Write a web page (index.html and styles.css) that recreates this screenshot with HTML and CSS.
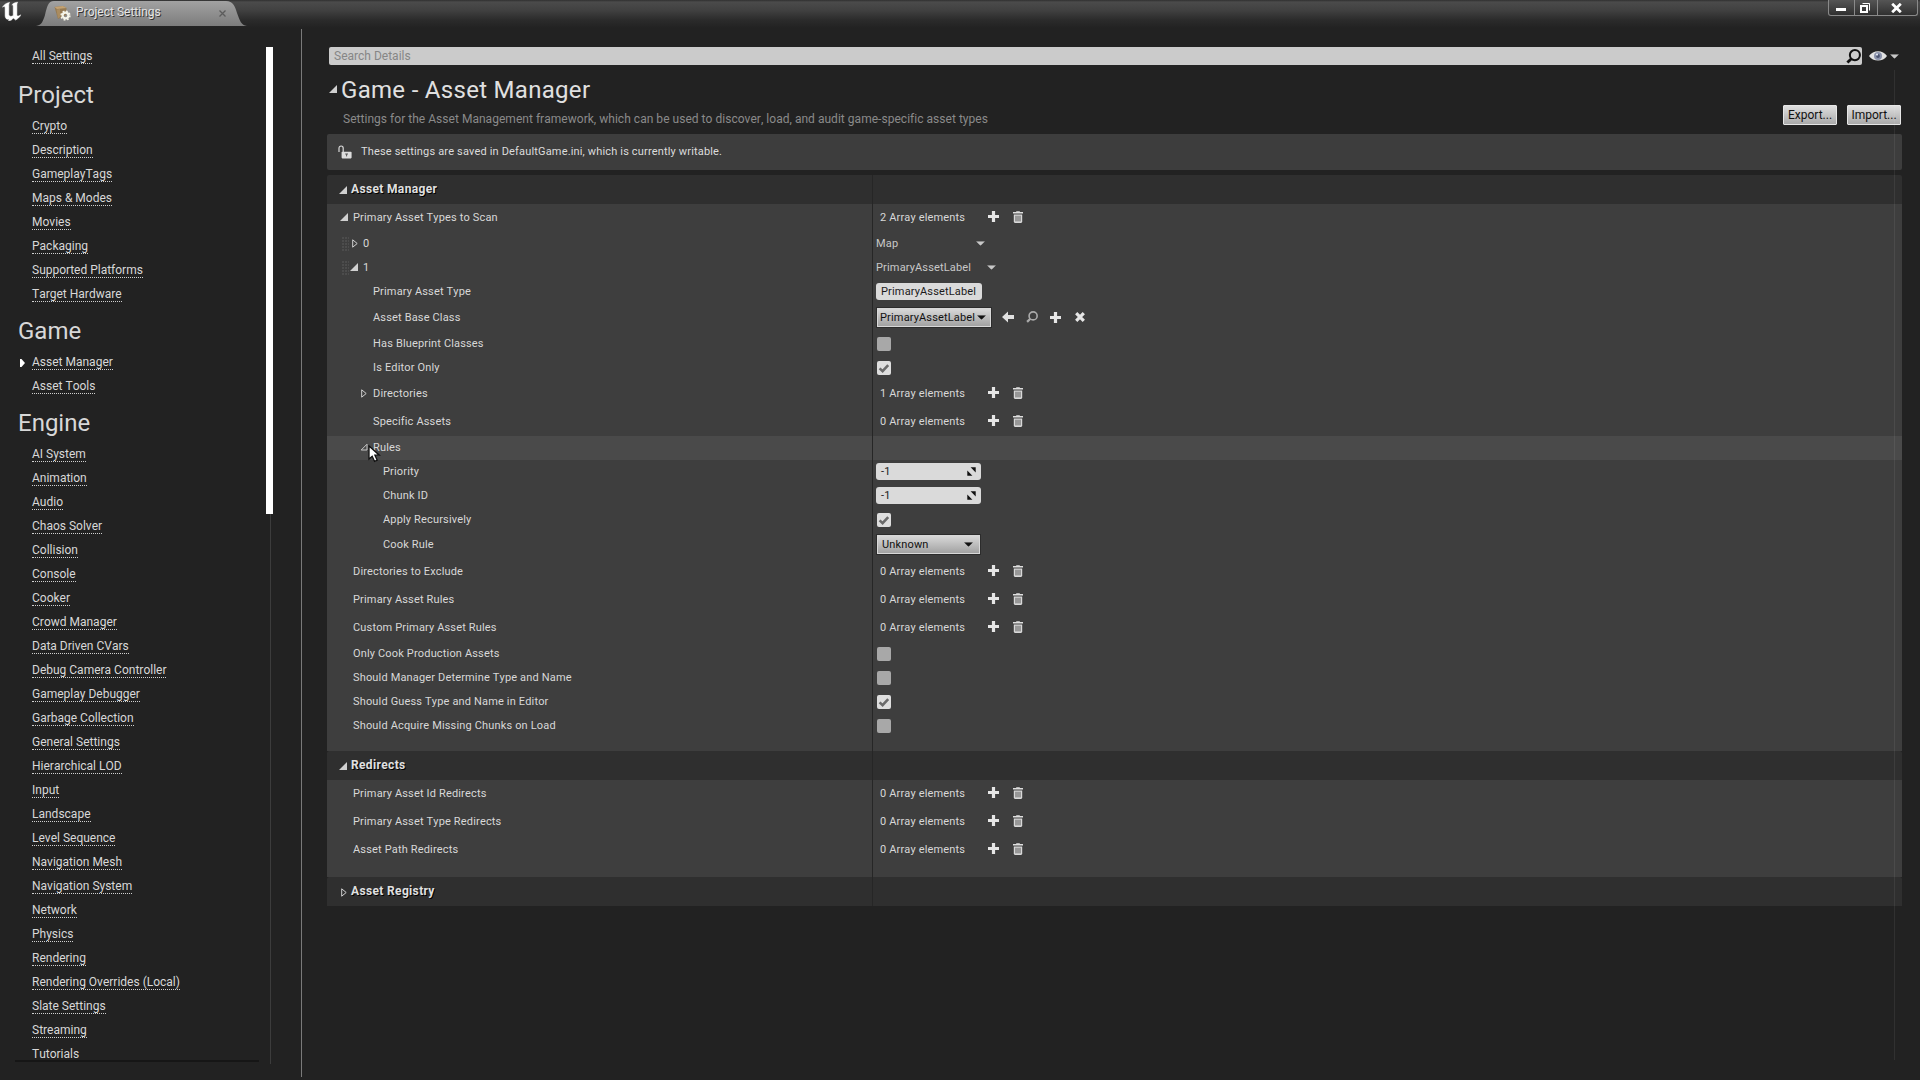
FILE: index.html
```html
<!DOCTYPE html>
<html lang="en">
<head>
    <meta charset="UTF-8">
    <title>Project Settings</title>
    <link rel="stylesheet" href="styles.css">
</head>
<body>
    <!-- shared icons -->
    <svg class="sprite" width="0" height="0">
        <symbol id="open" viewBox="0 0 8 8"><path d="M8 0V8H0Z" fill="#d0d0d0"/></symbol>
        <symbol id="open-hover" viewBox="0 0 8 8"><path d="M7 1.2V7H1.2Z" fill="none" stroke="#c8c8c8"/></symbol>
        <symbol id="closed" viewBox="0 0 6 9"><path d="M0.7 0.8V8.2L5.2 4.5Z" fill="none" stroke="#d0d0d0"/></symbol>
        <symbol id="down" viewBox="0 0 8 4"><path d="M0 0H8L4 4Z" fill="currentColor"/></symbol>
        <symbol id="plus" viewBox="0 0 11 11"><path d="M3.9 0H7.1V3.9H11V7.1H7.1V11H3.9V7.1H0V3.9H3.9Z" fill="#e6e6e6"/></symbol>
        <symbol id="trash" viewBox="0 0 10 12">
            <path d="M0 1.1H3.2V0.2H6.8V1.1H10V2.6H0Z" fill="#dedede"/>
            <path d="M0.8 3.4H9.2V10.6Q9.2 12 8 12H2Q0.8 12 0.8 10.6Z" fill="#d8d8d8"/>
            <path d="M3 4.7V10.4M5 4.7V10.4M7 4.7V10.4" stroke="#4a4a4a" stroke-width="0.9"/>
        </symbol>
        <symbol id="glass" viewBox="0 0 14 14">
            <circle cx="8.3" cy="5.7" r="4.7" fill="none" stroke="currentColor" stroke-width="1.9"/>
            <path d="M5 9L1.3 12.7" stroke="currentColor" stroke-width="2.6"/>
        </symbol>
        <symbol id="back" viewBox="0 0 12 12"><path d="M0 6L6 0.5V4H12V8H6V11.5Z" fill="#e0e0e0"/></symbol>
        <symbol id="cross" viewBox="0 0 10 10"><path d="M1.2 1.2L8.8 8.8M8.8 1.2L1.2 8.8" stroke="#e6e6e6" stroke-width="3.2"/></symbol>
        <symbol id="check" viewBox="0 0 14 14"><path d="M2.6 7.4L5.6 10.2L11.2 4.2" fill="none" stroke="#6a6a6a" stroke-width="2.6"/></symbol>
        <symbol id="spin" viewBox="0 0 9 9"><path d="M3.6 0.3H8.7V5.4ZM0.3 3.6V8.7H5.4Z" fill="#111"/></symbol>
    </svg>

    <header class="titlebar">
        <svg class="logo" width="20" height="21" viewBox="0 0 20 21">
            <path d="M0.5 7.2C2 4.3 4.6 3 7.6 2.4C6.9 3.4 6.8 4.2 6.8 5.3V15C7.5 16.4 9.5 16.8 11.2 15.6V6.4C11.2 5.2 10.6 4.6 9.8 4.9C11.2 3.3 13.2 2.3 15.7 2.2C15 3.2 14.9 4.2 14.9 5.4V14.9C15 16.3 16.2 16.6 18.7 14.8C18 17.3 15.6 18.7 13.7 20.1L11.3 18C10.4 19.5 9 20.7 6.4 20.8C7 20.2 7.2 19.7 6.7 19.3C4.4 19.5 3.2 18 3.1 15.9V7.8C3.1 6.1 1.6 6.2 0.5 7.2Z" fill="#fff" stroke="#fff" stroke-width="0.5"/>
        </svg>
        <div class="tab">
            <svg class="tab-shape" width="211" height="26" viewBox="0 0 211 26">
                <defs>
                    <linearGradient id="tab-fill" x1="0" y1="0" x2="0" y2="1">
                        <stop offset="0" stop-color="#a2a2a2"/>
                        <stop offset="1" stop-color="#7c7c7c"/>
                    </linearGradient>
                </defs>
                <path d="M0 26C6 25 7 21 9 15C11 7 12 1 18 1H190C197 1 199 6 201 13C204 21 205 25 211 26Z" fill="url(#tab-fill)"/>
            </svg>
            <svg class="tab-icon" width="17" height="16" viewBox="0 0 17 16">
                <path d="M0.5 2L9 1L12.5 3L12 10L4 14Z" fill="#957a52"/>
                <path d="M0.5 2L9 1L12.5 3L3 4Z" fill="#c4a272"/>
                <path d="M2.5 4.5L6 4V12L4 13.5Z" fill="#aa8c60"/>
                <circle cx="11.5" cy="10.5" r="2.9" fill="none" stroke="#f4f4e8" stroke-width="2.2"/>
                <circle cx="11.5" cy="10.5" r="4.4" fill="none" stroke="#f4f4e8" stroke-width="1.5" stroke-dasharray="1.8 1.65"/>
            </svg>
            <span class="tab-title">Project Settings</span>
            <svg class="tab-close" width="7" height="7" viewBox="0 0 7 7"><path d="M0.5 0.5L6.5 6.5M6.5 0.5L0.5 6.5" stroke="#5c5c5c" stroke-width="1.3"/></svg>
        </div>
        <div class="window-buttons">
            <div class="window-button"><svg width="10" height="3"><rect width="10" height="3" fill="#fff"/></svg></div>
            <div class="window-button"><svg width="10" height="10" viewBox="0 0 10 10"><path d="M1 3H7V9H1Z" fill="none" stroke="#fff" stroke-width="2"/><path d="M2.5 0.5H9.5V7.5" fill="none" stroke="#fff"/></svg></div>
            <div class="window-button close"><svg width="11" height="10" viewBox="0 0 11 10"><path d="M1.2 0.8L9.8 9.2M9.8 0.8L1.2 9.2" stroke="#fff" stroke-width="2.8"/></svg></div>
        </div>
    </header>

    <main class="window">
        <nav class="sidebar">
            <div class="sidebar-list">
                <div class="item all"><a>All Settings</a></div>
                <h2>Project</h2>
                <div class="item"><a>Crypto</a></div>
                <div class="item"><a>Description</a></div>
                <div class="item"><a>GameplayTags</a></div>
                <div class="item"><a>Maps &amp; Modes</a></div>
                <div class="item"><a>Movies</a></div>
                <div class="item"><a>Packaging</a></div>
                <div class="item"><a>Supported Platforms</a></div>
                <div class="item"><a>Target Hardware</a></div>
                <h2>Game</h2>
                <div class="item"><svg class="current" width="5" height="8"><path d="M0 0H1.5L5 4L1.5 8H0Z" fill="#fff"/></svg><a>Asset Manager</a></div>
                <div class="item"><a>Asset Tools</a></div>
                <h2>Engine</h2>
                <div class="item"><a>AI System</a></div>
                <div class="item"><a>Animation</a></div>
                <div class="item"><a>Audio</a></div>
                <div class="item"><a>Chaos Solver</a></div>
                <div class="item"><a>Collision</a></div>
                <div class="item"><a>Console</a></div>
                <div class="item"><a>Cooker</a></div>
                <div class="item"><a>Crowd Manager</a></div>
                <div class="item"><a>Data Driven CVars</a></div>
                <div class="item"><a>Debug Camera Controller</a></div>
                <div class="item"><a>Gameplay Debugger</a></div>
                <div class="item"><a>Garbage Collection</a></div>
                <div class="item"><a>General Settings</a></div>
                <div class="item"><a>Hierarchical LOD</a></div>
                <div class="item"><a>Input</a></div>
                <div class="item"><a>Landscape</a></div>
                <div class="item"><a>Level Sequence</a></div>
                <div class="item"><a>Navigation Mesh</a></div>
                <div class="item"><a>Navigation System</a></div>
                <div class="item"><a>Network</a></div>
                <div class="item"><a>Physics</a></div>
                <div class="item"><a>Rendering</a></div>
                <div class="item"><a>Rendering Overrides (Local)</a></div>
                <div class="item"><a>Slate Settings</a></div>
                <div class="item"><a>Streaming</a></div>
                <div class="item"><a>Tutorials</a></div>
            </div>
            <div class="scrollbar"><div class="thumb"></div></div>
        </nav>

        <section class="details">
            <div class="search-row">
                <div class="search">
                    <span>Search Details</span>
                    <svg width="15" height="15"><use href="#glass"/></svg>
                </div>
                <svg class="eye" width="18" height="12" viewBox="0 0 18 12">
                    <path d="M0 6C4 -0.5 14 -0.5 18 6C14 12 4 12 0 6Z" fill="#e2e2e2"/>
                    <circle cx="9" cy="6" r="4" fill="#8b93ab"/>
                    <circle cx="9" cy="6" r="1.9" fill="#4a5270"/>
                    <circle cx="8" cy="4.6" r="1.1" fill="#dfe4f0"/>
                </svg>
                <svg class="caret" width="9" height="5" viewBox="0 0 8 4"><use href="#down"/></svg>
            </div>

            <div class="page-head">
                <div class="page-title">
                    <svg width="8" height="8"><use href="#open"/></svg>
                    <h1>Game - Asset Manager</h1>
                </div>
                <div class="page-sub">
                    <p>Settings for the Asset Management framework, which can be used to discover, load, and audit game-specific asset types</p>
                    <button>Export...</button>
                    <button>Import...</button>
                </div>
            </div>

            <div class="notice">
                <svg width="14" height="14" viewBox="0 0 14 14">
                    <path d="M1 7V3.2Q1 1 3.2 1Q5.2 1 5.2 3.2V7" fill="none" stroke="#d8d8d8" stroke-width="1.2"/>
                    <rect x="3.6" y="6.8" width="10" height="6.6" rx="0.8" fill="#dcdcdc"/>
                    <path d="M7.2 9H10M8.6 9V11.4" stroke="#555"/>
                </svg>
                <span>These settings are saved in DefaultGame.ini, which is currently writable.</span>
            </div>

            <div class="panel">
                <div class="category">
                    <div class="name"><svg width="8" height="8"><use href="#open"/></svg>Asset Manager</div>
                    <div class="value"></div>
                </div>
                <div class="rows">
                    <div class="row tall">
                        <div class="name"><svg width="8" height="8"><use href="#open"/></svg><span>Primary Asset Types to Scan</span></div>
                        <div class="value array"><span>2 Array elements</span><svg width="11" height="11"><use href="#plus"/></svg><svg width="10" height="12"><use href="#trash"/></svg></div>
                    </div>
                    <div class="row">
                        <div class="name element"><i class="grip"></i><svg width="6" height="9"><use href="#closed"/></svg><span>0</span></div>
                        <div class="value menu"><span>Map</span><svg width="9" height="5" viewBox="0 0 8 4"><use href="#down"/></svg></div>
                    </div>
                    <div class="row">
                        <div class="name element"><i class="grip"></i><svg class="shift" width="8" height="8"><use href="#open"/></svg><span>1</span></div>
                        <div class="value menu"><span class="long">PrimaryAssetLabel</span><svg width="9" height="5" viewBox="0 0 8 4"><use href="#down"/></svg></div>
                    </div>
                    <div class="row">
                        <div class="name level-2"><span>Primary Asset Type</span></div>
                        <div class="value"><div class="field type"><span>PrimaryAssetLabel</span></div></div>
                    </div>
                    <div class="row tall">
                        <div class="name level-2"><span>Asset Base Class</span></div>
                        <div class="value asset">
                            <div class="combo class-combo"><span>PrimaryAssetLabel</span><svg width="9" height="5" viewBox="0 0 8 4"><use href="#down"/></svg></div>
                            <svg width="12" height="12"><use href="#back"/></svg>
                            <svg class="browse" width="12" height="12"><use href="#glass"/></svg>
                            <svg width="11" height="11"><use href="#plus"/></svg>
                            <svg class="clear" width="10" height="10"><use href="#cross"/></svg>
                        </div>
                    </div>
                    <div class="row">
                        <div class="name level-2"><span>Has Blueprint Classes</span></div>
                        <div class="value"><i class="checkbox"></i></div>
                    </div>
                    <div class="row">
                        <div class="name level-2"><span>Is Editor Only</span></div>
                        <div class="value"><svg class="checkbox checked"><use href="#check"/></svg></div>
                    </div>
                    <div class="row tall">
                        <div class="name level-2"><svg width="6" height="9"><use href="#closed"/></svg><span>Directories</span></div>
                        <div class="value array"><span>1 Array elements</span><svg width="11" height="11"><use href="#plus"/></svg><svg width="10" height="12"><use href="#trash"/></svg></div>
                    </div>
                    <div class="row tall">
                        <div class="name level-2"><span>Specific Assets</span></div>
                        <div class="value array"><span>0 Array elements</span><svg width="11" height="11"><use href="#plus"/></svg><svg width="10" height="12"><use href="#trash"/></svg></div>
                    </div>
                    <div class="row hovered">
                        <div class="name level-2">
                            <svg width="8" height="8"><use href="#open-hover"/></svg><span>Rules</span>
                            <svg class="cursor" width="13" height="18" viewBox="0 0 13 18"><path d="M1 1V14L4.2 11.2L6.6 16.4L9.2 15.2L6.9 10.2H11.3Z" fill="#fff" stroke="#111" stroke-width="1.3"/></svg>
                        </div>
                        <div class="value"></div>
                    </div>
                    <div class="row">
                        <div class="name level-3"><span>Priority</span></div>
                        <div class="value"><div class="field number"><span>-1</span><svg width="9" height="9"><use href="#spin"/></svg></div></div>
                    </div>
                    <div class="row">
                        <div class="name level-3"><span>Chunk ID</span></div>
                        <div class="value"><div class="field number"><span>-1</span><svg width="9" height="9"><use href="#spin"/></svg></div></div>
                    </div>
                    <div class="row">
                        <div class="name level-3"><span>Apply Recursively</span></div>
                        <div class="value"><svg class="checkbox checked"><use href="#check"/></svg></div>
                    </div>
                    <div class="row mid">
                        <div class="name level-3"><span>Cook Rule</span></div>
                        <div class="value"><div class="combo cook-combo"><span>Unknown</span><svg width="9" height="5" viewBox="0 0 8 4"><use href="#down"/></svg></div></div>
                    </div>
                    <div class="row tall">
                        <div class="name"><span>Directories to Exclude</span></div>
                        <div class="value array"><span>0 Array elements</span><svg width="11" height="11"><use href="#plus"/></svg><svg width="10" height="12"><use href="#trash"/></svg></div>
                    </div>
                    <div class="row tall">
                        <div class="name"><span>Primary Asset Rules</span></div>
                        <div class="value array"><span>0 Array elements</span><svg width="11" height="11"><use href="#plus"/></svg><svg width="10" height="12"><use href="#trash"/></svg></div>
                    </div>
                    <div class="row tall">
                        <div class="name"><span>Custom Primary Asset Rules</span></div>
                        <div class="value array"><span>0 Array elements</span><svg width="11" height="11"><use href="#plus"/></svg><svg width="10" height="12"><use href="#trash"/></svg></div>
                    </div>
                    <div class="row">
                        <div class="name"><span>Only Cook Production Assets</span></div>
                        <div class="value"><i class="checkbox"></i></div>
                    </div>
                    <div class="row">
                        <div class="name"><span>Should Manager Determine Type and Name</span></div>
                        <div class="value"><i class="checkbox"></i></div>
                    </div>
                    <div class="row">
                        <div class="name"><span>Should Guess Type and Name in Editor</span></div>
                        <div class="value"><svg class="checkbox checked"><use href="#check"/></svg></div>
                    </div>
                    <div class="row">
                        <div class="name"><span>Should Acquire Missing Chunks on Load</span></div>
                        <div class="value"><i class="checkbox"></i></div>
                    </div>
                    <div class="row end"><div class="name"></div><div class="value"></div></div>
                </div>

                <div class="category">
                    <div class="name"><svg width="8" height="8"><use href="#open"/></svg>Redirects</div>
                    <div class="value"></div>
                </div>
                <div class="rows">
                    <div class="row tall">
                        <div class="name"><span>Primary Asset Id Redirects</span></div>
                        <div class="value array"><span>0 Array elements</span><svg width="11" height="11"><use href="#plus"/></svg><svg width="10" height="12"><use href="#trash"/></svg></div>
                    </div>
                    <div class="row tall">
                        <div class="name"><span>Primary Asset Type Redirects</span></div>
                        <div class="value array"><span>0 Array elements</span><svg width="11" height="11"><use href="#plus"/></svg><svg width="10" height="12"><use href="#trash"/></svg></div>
                    </div>
                    <div class="row tall">
                        <div class="name"><span>Asset Path Redirects</span></div>
                        <div class="value array"><span>0 Array elements</span><svg width="11" height="11"><use href="#plus"/></svg><svg width="10" height="12"><use href="#trash"/></svg></div>
                    </div>
                    <div class="row end"><div class="name"></div><div class="value"></div></div>
                </div>

                <div class="category">
                    <div class="name"><svg width="6" height="9"><use href="#closed"/></svg>Asset Registry</div>
                    <div class="value"></div>
                </div>
            </div>
            <div class="details-track"></div>
        </section>
    </main>
</body>
</html>
```
FILE: styles.css
```css
* {
    box-sizing: border-box;
}
body {
    margin: 0;
    width: 1920px;
    height: 1080px;
    overflow: hidden;
    display: flex;
    flex-direction: column;
    background: #222;
    color: #d8d8d8;
    font-family: Roboto, "Liberation Sans", sans-serif;
    font-size: 12px;
    line-height: 14px;
    font-kerning: none;
}
h1, h2, p {
    margin: 0;
    font-weight: normal;
}
svg {
    display: block;
    flex: none;
}
.sprite {
    position: absolute;
}

/* title bar */
.titlebar {
    flex: none;
    height: 29px;
    display: flex;
    align-items: flex-start;
    background: linear-gradient(#303030 0, #4b4b4b 2px, #414141 10px, #2b2b2b 20px, #222 28px);
}
.logo {
    margin-left: 2px;
}
.tab {
    position: relative;
    width: 211px;
    height: 26px;
    margin-left: 14px;
    padding-left: 18px;
    display: flex;
    align-items: center;
}
.tab-shape {
    position: absolute;
    left: 0;
    top: 0;
}
.tab-icon,
.tab-title,
.tab-close {
    position: relative;
}
.tab-title {
    margin: -2px 0 0 5px;
    width: 143px;
    color: #e4e4e4;
    text-shadow: 1px 1px 0 #333;
}
.window-buttons {
    margin-left: auto;
    margin-right: 2px;
    display: flex;
    height: 16px;
    border: 1px solid #8a8a8a;
    border-top: none;
    border-radius: 0 0 3px 3px;
    background: linear-gradient(#555, #303030);
}
.window-button {
    width: 25px;
    height: 15px;
    padding-right: 2px;
    display: flex;
    align-items: center;
    justify-content: center;
}
.window-button + .window-button {
    width: 23px;
    border-left: 1px solid #8a8a8a;
}
.window-button.close.close {
    width: 40px;
}
.window-button:first-child {
    padding-top: 4px;
}

/* sidebar */
.window {
    flex: 1;
    display: flex;
    min-height: 0;
}
.sidebar {
    width: 302px;
    height: 1048px;
    padding-top: 14px;
    display: flex;
    border-right: 1px solid #7a7a7a;
}
.sidebar-list {
    width: 244px;
    height: 1019px;
    margin: 0 4px 0 15px;
    overflow: hidden;
    border-bottom: 2px solid #161616;
}
.item {
    height: 24px;
    padding-left: 17px;
    display: flex;
    align-items: flex-start;
}
.item.all {
    height: 26px;
}
.item a {
    margin-top: 5px;
    height: 16px;
    line-height: 17px;
    border-bottom: 1px dotted #d0d0d0;
}
.item .current {
    margin: 10px 7px 0 -12px;
}
.sidebar h2 {
    height: 44px;
    padding: 12px 0 0 3px;
    font-size: 24px;
    line-height: 28px;
    color: #d8d8d8;
}
.scrollbar {
    width: 7px;
    height: 1017px;
    margin: 4px 0 0 3px;
    background: linear-gradient(#3c3c3c, #3c3c3c) 4px 0 / 1px 100% no-repeat;
}
.thumb {
    height: 467px;
    background: #fff;
}

/* details view */
.details {
    position: relative;
    flex: 1;
    padding: 18px 18px 0 25px;
}
.search-row {
    height: 18px;
    padding-left: 2px;
    display: flex;
    align-items: center;
}
.search {
    width: 1533px;
    height: 18px;
    padding: 0 1px 0 5px;
    display: flex;
    align-items: center;
    justify-content: space-between;
    background: #cbcbcb;
    border-radius: 2px;
    color: #868686;
}
.search svg {
    color: #111;
}
.eye {
    margin-left: 7px;
}
.caret {
    margin-left: 3px;
    color: #c8c8c8;
}
.page-head {
    height: 69px;
}
.page-title {
    height: 40px;
    padding-left: 2px;
    display: flex;
}
.page-title svg {
    margin-top: 20px;
}
h1 {
    margin: 11px 0 0 4px;
    font-size: 24px;
    line-height: 28px;
    letter-spacing: 0.3px;
    color: #e0e0e0;
}
.page-sub {
    display: flex;
    padding: 0 1px 0 16px;
    color: #8a8a8a;
}
.page-sub p {
    flex: 1;
    margin-top: 7px;
    letter-spacing: 0.03px;
}
button {
    width: 54px;
    height: 20px;
    margin-left: 10px;
    padding: 0;
    border: 1px solid #e6e6e6;
    border-radius: 1px;
    background: linear-gradient(#dedede, #aaa);
    color: #111;
    font: 12px/14px Roboto, sans-serif;
}
.notice {
    height: 36px;
    padding-left: 11px;
    display: flex;
    align-items: center;
    background: #3d3d3d;
    border-radius: 2px;
    font-size: 11px;
    letter-spacing: 0.16px;
    color: #dcdcdc;
}
.notice span {
    margin: -1px 0 0 9px;
}
.panel {
    margin-top: 5px;
    font-size: 11px;
    letter-spacing: 0.16px;
}
.name {
    width: 545px;
    display: flex;
    align-items: center;
    padding-left: 26px;
}
.value {
    flex: 1;
    display: flex;
    align-items: center;
    padding-left: 4px;
    border-left: 1px solid #262626;
}
.category {
    height: 29px;
    display: flex;
    background: #2f2f2f;
    border-radius: 2px 2px 0 0;
    font-size: 12px;
    font-weight: bold;
    letter-spacing: 0.35px;
    color: #e0e0e0;
    text-shadow: 1px 1px 0 #000;
}
.category .name {
    padding-left: 13px;
    padding-bottom: 1px;
}
.category svg {
    margin: 2px 4px 0 -1px;
}
.category svg[width="6"] {
    margin: 2px 4px 0 1px;
}
.rows {
    background: #3e3e3e;
}
.row {
    height: 24px;
    display: flex;
}
.row.mid {
    height: 26px;
}
.row.tall {
    height: 28px;
}
.row.end {
    height: 13px;
}
.row.hovered {
    background: #4a4a4a;
}
.row .name > svg:first-child {
    margin: -2px 5px 0 -13px;
}
.row .name > svg[width="6"]:first-child {
    margin: -1px 6px 0 -12px;
}
.name.level-2 {
    position: relative;
    padding-left: 46px;
}
.name.level-3 {
    padding-left: 56px;
}
.name.element {
    padding-left: 15px;
}
.element svg {
    margin: -1px 5px 0 3px;
}
.element svg.shift {
    margin: -2px 5px 0 1px;
}
.grip {
    width: 7px;
    height: 14px;
    background: radial-gradient(circle at 1px 1px, #6c6c6c 0.5px, transparent 0.8px) 0 0 / 3px 3px;
}
.cursor {
    position: absolute;
    left: 41px;
    top: 9px;
}

/* value widgets */
.array > span {
    width: 108px;
    margin-left: 3px;
}
.array svg {
    margin: -3px 14px 0 0;
}
.array svg[width="10"] {
    margin-top: -2px;
}
.menu {
    color: #c8c8c8;
}
.menu > span {
    width: 100px;
    margin-left: -1px;
}
.menu > span.long {
    width: 111px;
}
.menu svg {
    margin-top: -2px;
}
.field {
    height: 17px;
    display: flex;
    align-items: center;
    margin: -1px 0 0 -1px;
    padding: 0 5px;
    background: #dadada;
    border-radius: 3px;
    color: #1a1a1a;
}
.field.type {
    width: 106px;
}
.field.number {
    width: 105px;
    justify-content: space-between;
}
.combo {
    height: 19px;
    margin-top: -1px;
    display: flex;
    align-items: center;
    justify-content: space-between;
    border: 1px solid #d8d8d8;
    box-shadow: 0 0 0 1px #2c2c2c;
    background: linear-gradient(#d8d8d8, #a2a2a2);
    color: #111;
}
.class-combo {
    width: 114px;
    padding: 0 4px 0 2px;
    margin-right: 11px;
}
.cook-combo {
    width: 103px;
    padding: 0 6px 0 4px;
}
.asset > svg {
    margin: -2px 12px 0 0;
}
.asset > svg.clear {
    margin-left: 2px;
}
.browse {
    color: #aaa;
}
.checkbox {
    width: 14px;
    height: 14px;
    background: #a8a8a8;
    border-radius: 2px;
}
.checkbox.checked {
    background: #dedede;
}
.details-track {
    position: absolute;
    left: 1592px;
    top: 41px;
    width: 1px;
    height: 990px;
    background: rgba(255, 255, 255, 0.07);
}
```
